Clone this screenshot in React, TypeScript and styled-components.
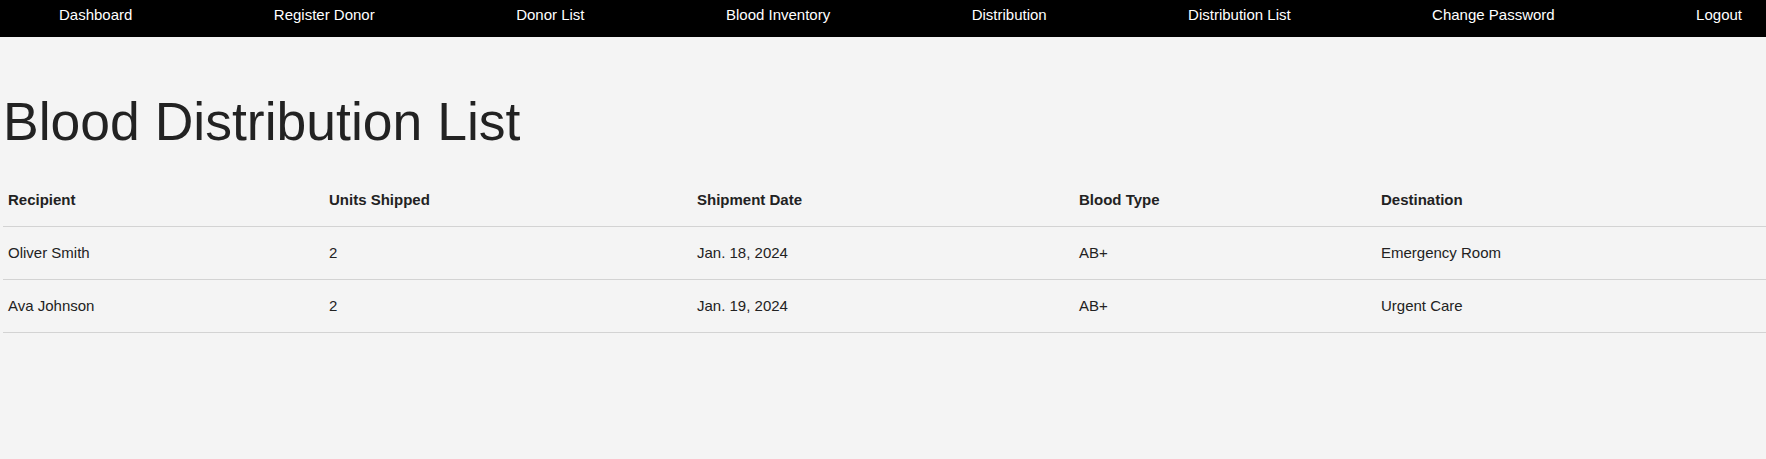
import React from "react";
import styled, { createGlobalStyle } from "styled-components";

const GlobalStyle = createGlobalStyle`
  html, body {
    margin: 0;
    padding: 0;
    background: #f4f4f4;
  }
  body {
    font-family: "Liberation Sans", Arial, Helvetica, sans-serif;
    color: #222;
  }
`;

const NavBar = styled.nav`
  display: flex;
  justify-content: space-between;
  align-items: flex-start;
  box-sizing: border-box;
  height: 37px;
  padding-left: 35px;
  background: #000;
`;

const NavLink = styled.a`
  display: block;
  padding: 6px 24px 0;
  color: #fff;
  font-size: 15px;
  line-height: 17px;
  text-decoration: none;
  white-space: nowrap;
`;

const Main = styled.main`
  display: flex;
  flex-direction: column;
`;

const Title = styled.h1`
  margin: 54px 0 21.5px 3px;
  font-size: 53.5px;
  font-weight: 400;
  line-height: normal;
  color: #222;
`;

const Table = styled.table`
  margin-left: 3px;
  width: calc(100% - 3px);
  border-collapse: collapse;
  table-layout: fixed;
`;

const HeadCell = styled.th<{ $width?: number }>`
  box-sizing: border-box;
  width: ${(p) => (p.$width ? `${p.$width}px` : "auto")};
  padding: 17.5px 4px 17.5px 5px;
  border-bottom: 1px solid #d3d3d3;
  text-align: left;
  font-size: 15px;
  font-weight: 700;
  line-height: normal;
  color: #222;
`;

const Cell = styled.td`
  box-sizing: border-box;
  padding: 17.5px 4px 17.5px 5px;
  border-bottom: 1px solid #d3d3d3;
  text-align: left;
  font-size: 15px;
  line-height: normal;
  color: #222;
`;

const navItems = [
  "Dashboard",
  "Register Donor",
  "Donor List",
  "Blood Inventory",
  "Distribution",
  "Distribution List",
  "Change Password",
  "Logout",
];

const columns: { label: string; width?: number }[] = [
  { label: "Recipient", width: 321 },
  { label: "Units Shipped", width: 368 },
  { label: "Shipment Date", width: 382 },
  { label: "Blood Type", width: 302 },
  { label: "Destination" },
];

const rows = [
  ["Oliver Smith", "2", "Jan. 18, 2024", "AB+", "Emergency Room"],
  ["Ava Johnson", "2", "Jan. 19, 2024", "AB+", "Urgent Care"],
];

export default function App() {
  return (
    <>
      <GlobalStyle />
      <NavBar>
        {navItems.map((item) => (
          <NavLink key={item} href="#">
            {item}
          </NavLink>
        ))}
      </NavBar>
      <Main>
        <Title>Blood Distribution List</Title>
        <Table>
          <thead>
            <tr>
              {columns.map((c) => (
                <HeadCell key={c.label} $width={c.width}>
                  {c.label}
                </HeadCell>
              ))}
            </tr>
          </thead>
          <tbody>
            {rows.map((r) => (
              <tr key={r[0]}>
                {r.map((v, i) => (
                  <Cell key={i}>{v}</Cell>
                ))}
              </tr>
            ))}
          </tbody>
        </Table>
      </Main>
    </>
  );
}
